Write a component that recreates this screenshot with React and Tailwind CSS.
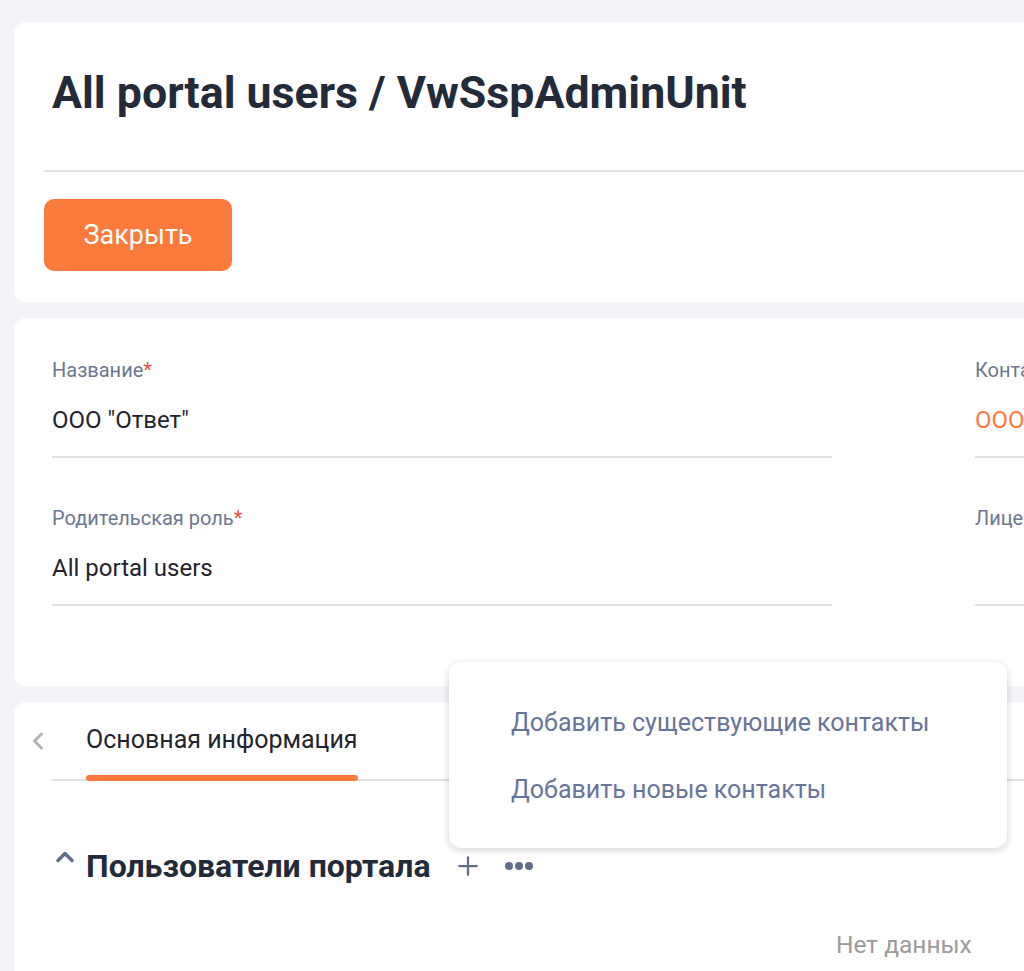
// Карточка административной единицы портала (просмотр записи)
import { Plus, ChevronLeft, ChevronUp } from 'lucide-react'

const FONT = { fontFamily: 'Roboto, "Noto Sans", Arial, sans-serif' }

const ПОЛЯ_СЛЕВА = [
  { label: 'Название', value: 'ООО "Ответ"' },
  { label: 'Родительская роль', value: 'All portal users' },
]

const ПОЛЯ_СПРАВА = [
  { label: 'Контакт', value: 'ООО "Ответ"', link: true },
  { label: 'Лицевой счёт', value: '' },
]

function Поле({ label, value, required, link }) {
  return (
    <div className="h-[148px] pt-[40px]">
      <div className="text-[20px] leading-[24px] text-[#6c7790] whitespace-nowrap">
        {label}
        {required && <span className="text-[#e5533d]">*</span>}
      </div>
      <div
        className={`mt-[23px] h-[53px] text-[24px] leading-[30px] whitespace-nowrap border-b-2 border-[#e1e2e8] ${
          link ? 'text-[#fb7a3c]' : 'text-[#1f2430]'
        }`}
      >
        {value}
      </div>
    </div>
  )
}

export default function App() {
  return (
    <div className="relative w-[1024px] h-[971px] overflow-hidden bg-[#f4f5f9]" style={FONT}>
      <div className="w-[1300px] pl-[14px] pt-[22px] flex flex-col gap-[16px]">
        {/* ---- Шапка ---- */}
        <div className="bg-white rounded-xl h-[280px] pl-[30px] pt-[43px]">
          <h1 className="pl-[8px] text-[44.7px] leading-[56px] font-bold text-[#232b3a]">
            All portal users / VwSspAdminUnit
          </h1>
          <div className="mt-[49px] h-[2px] bg-[#e2e2ea]" />
          <button className="mt-[27px] w-[188px] h-[72px] rounded-[10px] bg-[#fb7a3c] text-white text-[27px] leading-[32px]">
            Закрыть
          </button>
        </div>

        {/* ---- Поля ---- */}
        <div className="bg-white rounded-xl h-[368px] pl-[38px] flex gap-[143px]">
          <div className="w-[780px] shrink-0">
            {ПОЛЯ_СЛЕВА.map((п) => (
              <Поле key={п.label} label={п.label} value={п.value} required />
            ))}
          </div>
          <div className="w-[300px] shrink-0">
            {ПОЛЯ_СПРАВА.map((п) => (
              <Поле key={п.label} label={п.label} value={п.value} link={п.link} />
            ))}
          </div>
        </div>

        {/* ---- Вкладки и раздел ---- */}
        <div className="bg-white rounded-xl h-[300px] pl-[38px]">
          <div className="relative flex items-center h-[79px] border-b-2 border-[#e1e2e8]">
            <ChevronLeft className="absolute -left-[28px] top-[25px] w-[28px] h-[28px] text-[#b3b3b3]" strokeWidth={2.5} />
            <div className="relative ml-[34px] h-full pt-[23px]">
              <span className="text-[25px] leading-[30px] text-[#1f2430] whitespace-nowrap">Основная информация</span>
              <div className="absolute left-0 right-0 -bottom-[2px] h-[6px] rounded-full bg-[#fb7a3c]" />
            </div>
          </div>

          <div className="flex items-center mt-[65px]">
            <ChevronUp className="-ml-[1px] w-[28px] h-[28px] text-[#5f6d8a] -mt-[18px]" strokeWidth={3} />
            <h2 className="ml-[7px] text-[32px] leading-[40px] font-bold text-[#232b3a]">Пользователи портала</h2>
            <Plus className="ml-[22px] w-[30px] h-[30px] text-[#5f6d8a]" strokeWidth={1.8} />
            <svg className="ml-[21px] w-[30px] h-[10px]" viewBox="0 0 30 10">
              <circle cx="5" cy="5" r="4" fill="#5f6d8a" />
              <circle cx="15" cy="5" r="4" fill="#5f6d8a" />
              <circle cx="25" cy="5" r="4" fill="#5f6d8a" />
            </svg>
          </div>

          <div className="pl-[784px] mt-[44px] text-[24.5px] leading-[30px] text-[#9b9b9b] whitespace-nowrap">Нет данных</div>
        </div>
      </div>

      {/* ---- Выпадающее меню ---- */}
      <div className="absolute left-[449px] top-[662px] w-[558px] h-[186px] bg-white rounded-xl shadow-[0_2px_8px_rgba(0,0,0,0.18)] pl-[62px] pt-[46px] flex flex-col gap-[37px]">
        <span className="text-[25px] leading-[30px] text-[#67759a] whitespace-nowrap">Добавить существующие контакты</span>
        <span className="text-[25px] leading-[30px] text-[#67759a] whitespace-nowrap">Добавить новые контакты</span>
      </div>
    </div>
  )
}
